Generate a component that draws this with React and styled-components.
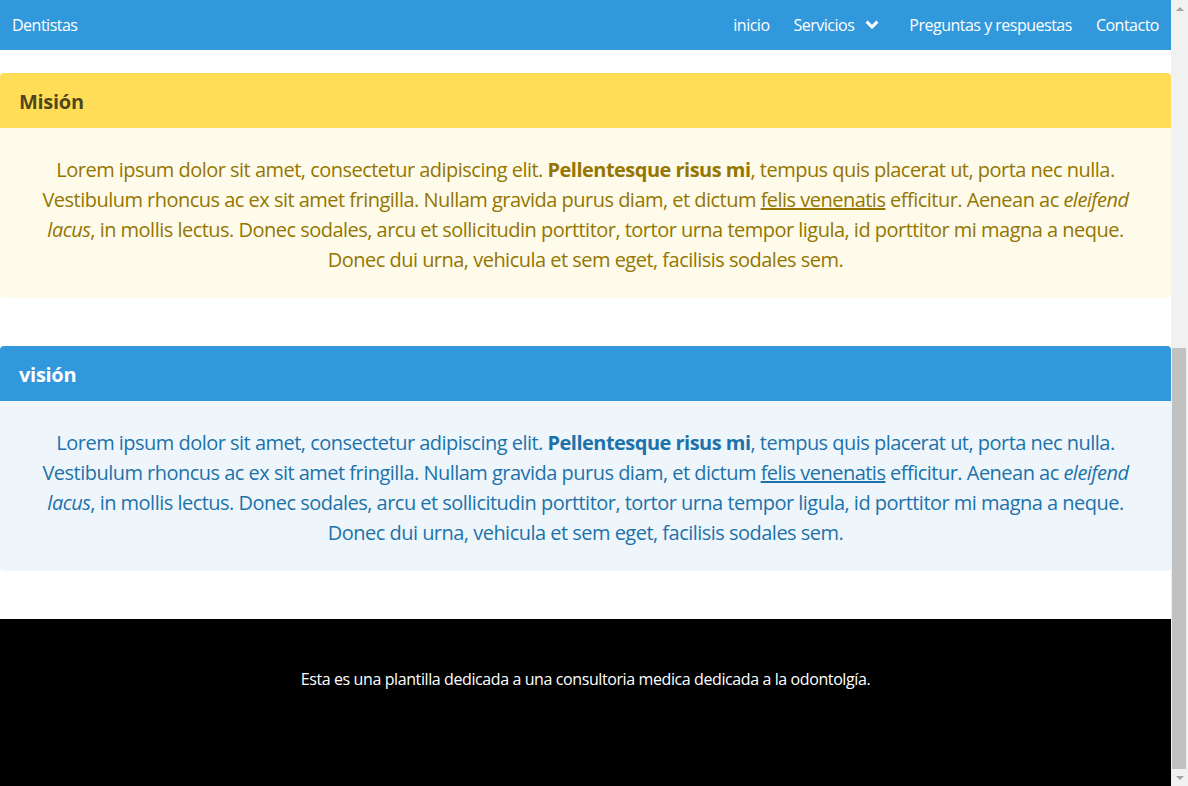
import React, { useLayoutEffect, useEffect, useRef, useState } from 'react';
import styled, { createGlobalStyle } from 'styled-components';

const GlobalStyle = createGlobalStyle`
    * { box-sizing: border-box; }
    html, body {
        margin: 0;
        overflow: hidden;
        background: #fff;
    }
    body {
        font-family: 'Open Sans', 'Noto Sans', sans-serif;
        font-size: 16px;
        line-height: 1.5;
        color: #4a4a4a;
    }
`;

const Frame = styled.div`
    display: flex;
    height: 100vh;
`;
// the page scrolls inside this box; its native bar is hidden and drawn by ScrollRail
const Viewport = styled.div`
    flex: 1;
    min-width: 0;
    overflow-y: scroll;
    scrollbar-width: none;

    &::-webkit-scrollbar { display: none; }
`;

const ScrollRail = styled.div`
    width: 17px;
    flex-shrink: 0;
    display: flex;
    flex-direction: column;
    background-color: #f1f1f1;
`;
const ScrollButton = styled.div`
    height: 17px;
    display: flex;
    align-items: center;
    justify-content: center;

    &::before {
        content: '';
        border-left: 4px solid transparent;
        border-right: 4px solid transparent;
        ${props => props.down
            ? 'border-top: 4px solid #a3a3a3;'
            : 'border-bottom: 4px solid #a3a3a3;'}
    }
`;
const ScrollTrack = styled.div`
    flex: 1;
    padding: 0 2px 0 1px;
`;
const ScrollThumb = styled.div`
    background-color: #c1c1c1;
`;

const Navbar = styled.nav`
    position: sticky;
    top: 0;
    z-index: 30;
    height: 50px;
    display: flex;
    justify-content: space-between;
    align-items: stretch;
    background-color: #3298dc;
`;
const NavGroup = styled.div`
    display: flex;
    align-items: stretch;
`;
const NavItem = styled.a`
    display: flex;
    align-items: center;
    gap: 11px;
    padding: 0 ${props => props.dropdown ? '18px' : '12px'} 1px 12px;
    color: #fff;
    font-size: 16px;
    letter-spacing: -0.5px;
    text-decoration: none;
    cursor: pointer;
`;
const Chevron = () => (
    <svg width="14" height="9" viewBox="0 0 14 9">
        <polyline points="1.6,1.6 7,7 12.4,1.6" fill="none" stroke="#fff" strokeWidth="3" />
    </svg>
);

const Page = styled.main`
    display: flex;
    flex-direction: column;
    gap: 48px;
`;
// the banner above the messages sits off screen once the page is scrolled down
const Hero = styled.section`
    height: 594px;
    background-color: #fff;
`;

const Message = styled.article`
    border-radius: 4px;
    overflow: hidden;
    font-size: 20px;
`;
const MessageHeader = styled.div`
    padding: 16px 20px 14px 19px;
    font-weight: 700;
    line-height: 1.25;
    letter-spacing: -0.3px;
    background-color: ${props => props.bg};
    color: ${props => props.color};
`;
const MessageBody = styled.div`
    padding: 27px 30px 23px;
    text-align: center;
    line-height: 1.5;
    letter-spacing: -0.52px;
    background-color: ${props => props.bg};
    color: ${props => props.color};

    strong { font-weight: 700; color: currentColor; }
    a { color: currentColor; text-decoration: underline; }
`;

const Footer = styled.footer`
    padding: 48px 24px 95px;
    background-color: #000;
    color: #fff;
    text-align: center;
    font-size: 16px;
    line-height: 1.5;
    letter-spacing: -0.4px;
`;

const variants = {
    warning: { header: '#ffdd57', headerText: 'rgba(0, 0, 0, 0.7)', body: '#fffbeb', bodyText: '#947600' },
    info: { header: '#3298dc', headerText: '#fff', body: '#eef6fc', bodyText: '#1d72aa' },
};

const LoremBody = () => (
    <>
        Lorem ipsum dolor sit amet, consectetur adipiscing elit. <strong>Pellentesque risus mi</strong>, tempus quis placerat ut, porta nec nulla. Vestibulum rhoncus ac ex sit amet fringilla. Nullam gravida purus diam, et dictum <a>felis venenatis</a> efficitur. Aenean ac <em>eleifend lacus</em>, in mollis lectus. Donec sodales, arcu et sollicitudin porttitor, tortor urna tempor ligula, id porttitor mi magna a neque. Donec dui urna, vehicula et sem eget, facilisis sodales sem.
    </>
);

const InfoMessage = ({ title, kind }) => {
    const v = variants[kind];
    return (
        <Message>
            <MessageHeader bg={v.header} color={v.headerText}>{title}</MessageHeader>
            <MessageBody bg={v.body} color={v.bodyText}><LoremBody /></MessageBody>
        </Message>
    );
};

export default function App() {
    const viewport = useRef(null);
    const track = useRef(null);
    const [thumb, setThumb] = useState({ top: 0, height: 0 });

    const measure = () => {
        const v = viewport.current;
        const t = track.current;
        if (!v || !t) return;
        const len = t.clientHeight;
        setThumb({
            top: (v.scrollTop / v.scrollHeight) * len,
            height: (v.clientHeight / v.scrollHeight) * len,
        });
    };
    const toBottom = () => {
        if (viewport.current) viewport.current.scrollTop = viewport.current.scrollHeight;
        measure();
    };
    useLayoutEffect(toBottom, []);
    useEffect(() => {
        const t = setTimeout(toBottom, 50);
        return () => clearTimeout(t);
    }, []);

    return (
        <>
            <GlobalStyle />
            <Frame>
                <Viewport ref={viewport} onScroll={measure}>
                    <Navbar>
                        <NavGroup>
                            <NavItem>Dentistas</NavItem>
                        </NavGroup>
                        <NavGroup>
                            <NavItem>inicio</NavItem>
                            <NavItem dropdown>Servicios <Chevron /></NavItem>
                            <NavItem>Preguntas y respuestas</NavItem>
                            <NavItem>Contacto</NavItem>
                        </NavGroup>
                    </Navbar>
                    <Page>
                        <Hero />
                        <InfoMessage title="Misión" kind="warning" />
                        <InfoMessage title="visión" kind="info" />
                        <Footer>Esta es una plantilla dedicada a una consultoria medica dedicada a la odontolgía.</Footer>
                    </Page>
                </Viewport>
                <ScrollRail>
                    <ScrollButton />
                    <ScrollTrack ref={track}>
                        <ScrollThumb style={{ marginTop: thumb.top, height: thumb.height }} />
                    </ScrollTrack>
                    <ScrollButton down />
                </ScrollRail>
            </Frame>
        </>
    );
}
